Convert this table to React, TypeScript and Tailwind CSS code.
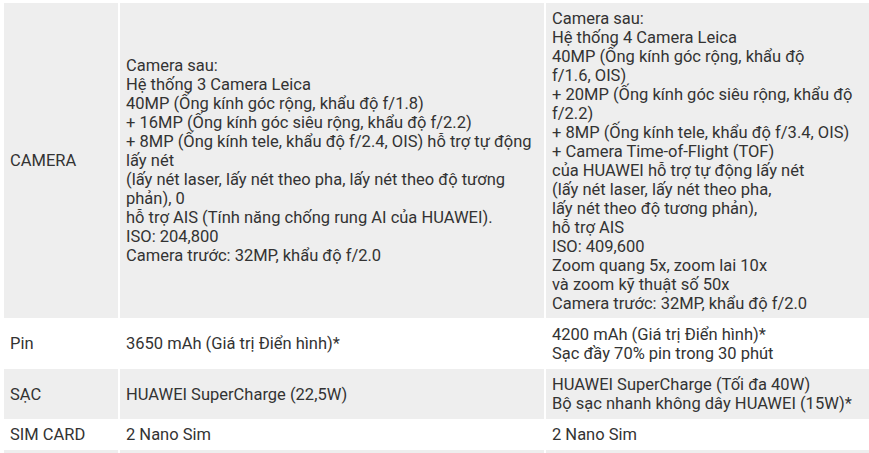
const rows: { label: string; a: string[]; b: string[]; h: string; gray: boolean }[] = [
  {
    label: "CAMERA",
    a: [
      "Camera sau:",
      "Hệ thống 3 Camera Leica",
      "40MP (Ống kính góc rộng, khẩu độ f/1.8)",
      "+ 16MP (Ống kính góc siêu rộng, khẩu độ f/2.2)",
      "+ 8MP (Ống kính tele, khẩu độ f/2.4, OIS) hỗ trợ tự động",
      "lấy nét",
      "(lấy nét laser, lấy nét theo pha, lấy nét theo độ tương",
      "phản), 0",
      "hỗ trợ AIS (Tính năng chống rung AI của HUAWEI).",
      "ISO: 204,800",
      "Camera trước: 32MP, khẩu độ f/2.0",
    ],
    b: [
      "Camera sau:",
      "Hệ thống 4 Camera Leica",
      "40MP (Ống kính góc rộng, khẩu độ",
      "f/1.6, OIS)",
      "+ 20MP (Ống kính góc siêu rộng, khẩu độ",
      "f/2.2)",
      "+ 8MP (Ống kính tele, khẩu độ f/3.4, OIS)",
      "+ Camera Time-of-Flight (TOF)",
      "của HUAWEI hỗ trợ tự động lấy nét",
      "(lấy nét laser, lấy nét theo pha,",
      "lấy nét theo độ tương phản),",
      "hỗ trợ AIS",
      "ISO: 409,600",
      "Zoom quang 5x, zoom lai 10x",
      "và zoom kỹ thuật số 50x",
      "Camera trước: 32MP, khẩu độ f/2.0",
    ],
    h: "h-[315px]",
    gray: true,
  },
  {
    label: "Pin",
    a: ["3650 mAh (Giá trị Điển hình)*"],
    b: ["4200 mAh (Giá trị Điển hình)*", "Sạc đầy 70% pin trong 30 phút"],
    h: "h-[51px]",
    gray: false,
  },
  {
    label: "SẠC",
    a: ["HUAWEI SuperCharge (22,5W)"],
    b: ["HUAWEI SuperCharge (Tối đa 40W)", "Bộ sạc nhanh không dây HUAWEI (15W)*"],
    h: "h-[50px]",
    gray: true,
  },
  {
    label: "SIM CARD",
    a: ["2 Nano Sim"],
    b: ["2 Nano Sim"],
    h: "h-[31px]",
    gray: false,
  },
];

function Lines({ items }: { items: string[] }) {
  return (
    <>
      {items.map((line, i) => (
        <div key={i} className="whitespace-nowrap">
          {line}
        </div>
      ))}
    </>
  );
}

export default function App() {
  return (
    <div className="h-[453px] w-[869px] overflow-hidden bg-white pl-[4px] pt-[3px] font-['Roboto',sans-serif] text-[16.5px] leading-[19px] text-[#333333]">
      <table className="w-[865px] table-fixed border-collapse">
        <colgroup>
          <col className="w-[115px]" />
          <col className="w-[426px]" />
          <col className="w-[324px]" />
        </colgroup>
        <tbody>
          {rows.map((row) => (
            <tr key={row.label} className={`${row.h} ${row.gray ? "bg-[#eeeeee]" : "bg-white"}`}>
              <td className="border-r-2 border-white px-[6px] align-middle">{row.label}</td>
              <td className="border-r-2 border-white px-[6px] align-middle">
                <Lines items={row.a} />
              </td>
              <td className="px-[6px] align-middle">
                <Lines items={row.b} />
              </td>
            </tr>
          ))}
          <tr className="h-[20px] bg-[#eeeeee]">
            <td className="border-r-2 border-white" />
            <td className="border-r-2 border-white" />
            <td />
          </tr>
        </tbody>
      </table>
    </div>
  );
}
